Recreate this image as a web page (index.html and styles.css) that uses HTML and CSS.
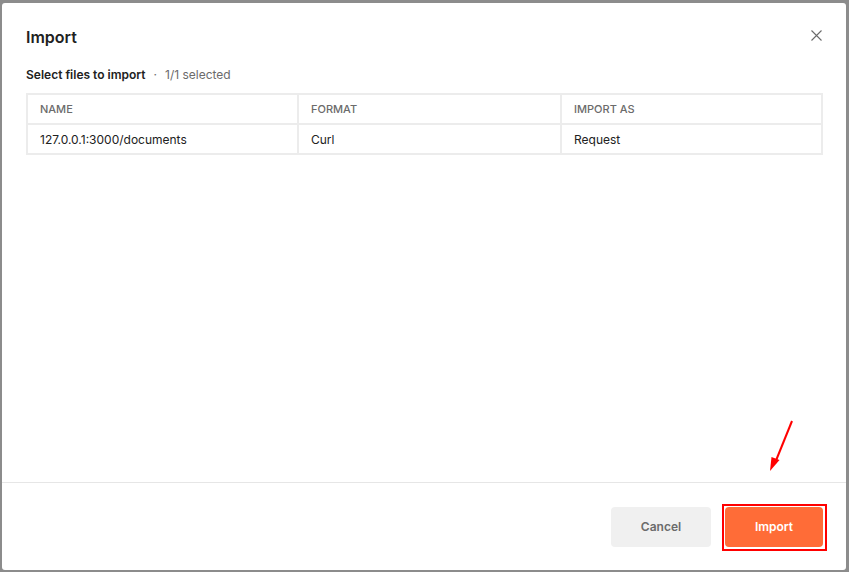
FILE: index.html
```html
<!DOCTYPE html>
<html>
<head>
<meta charset="utf-8">
<link rel="stylesheet" href="styles.css">
</head>
<body>
<div class="modal">
  <div class="header">
    <h1 class="title">Import</h1>
    <button class="close" aria-label="Close">
      <svg width="11" height="11" viewBox="0 0 11 11"><path d="M0.5 0.5 L10.5 10.5 M10.5 0.5 L0.5 10.5" stroke="#6b6b6b" stroke-width="1.1" fill="none"/></svg>
    </button>
  </div>
  <div class="body">
    <div class="subtitle"><span class="strong">Select files to import</span><span class="dot">·</span><span class="muted">1/1 selected</span></div>
    <div class="table">
      <div class="cell head">NAME</div>
      <div class="cell head">FORMAT</div>
      <div class="cell head">IMPORT AS</div>
      <div class="cell">127.0.0.1:3000/documents</div>
      <div class="cell">Curl</div>
      <div class="cell">Request</div>
    </div>
  </div>
  <div class="footer">
    <button class="btn cancel">Cancel</button>
    <button class="btn primary">Import</button>
  </div>
  <svg class="arrow" width="40" height="60" viewBox="0 0 40 60">
    <path d="M31 2 L14 44" stroke="#f00" stroke-width="2" fill="none"/>
    <path d="M9 52 L10.5 38 L18.5 41 Z" fill="#f00"/>
  </svg>
</div>
</body>
</html>
```

FILE: styles.css
```css
* { box-sizing: border-box; }
html, body { margin: 0; padding: 0; }
body {
  background: #8c8c8c;
  width: 849px;
  height: 572px;
  overflow: hidden;
  font-family: Inter, "Noto Sans", "Liberation Sans", sans-serif;
  padding: 3px 3px 2px 2px;
}
.modal {
  position: relative;
  background: #fff;
  width: 844px;
  height: 567px;
  border-radius: 3px;
  display: flex;
  flex-direction: column;
}
.header {
  display: flex;
  justify-content: space-between;
  align-items: flex-start;
  padding: 24px 24px 0 24px;
}
.title {
  margin: 0;
  font-size: 16px;
  line-height: 20px;
  font-weight: 600;
  color: #212121;
}
.close {
  border: 0;
  background: none;
  padding: 0;
  margin-top: 3px;
  width: 11px;
  height: 11px;
  display: flex;
}
.body {
  flex: 1;
  padding: 20px 23px 0 24px;
}
.subtitle {
  font-size: 12px;
  line-height: 16px;
  display: flex;
  align-items: center;
}
.strong { font-weight: 600; color: #212121; }
.dot { color: #6b6b6b; margin: 0 8px; }
.muted { color: #6b6b6b; }
.table {
  margin-top: 10px;
  display: grid;
  grid-template-columns: 271px 263px 1fr;
  border-top: 2px solid #ececec;
  border-left: 2px solid #ececec;
}
.cell {
  height: 30px;
  display: flex;
  align-items: center;
  padding-left: 12px;
  font-size: 12px;
  color: #212121;
  border-right: 2px solid #ececec;
  border-bottom: 2px solid #ececec;
}
.cell.head {
  font-size: 11px;
  color: #6b6b6b;
  font-weight: 500;
}
.footer {
  height: 88px;
  border-top: 1px solid #e6e6e6;
  display: flex;
  justify-content: flex-end;
  align-items: center;
  gap: 14px;
  padding: 0 23px 0 0;
}
.btn {
  border: 0;
  height: 40px;
  border-radius: 4px;
  font-family: inherit;
  font-size: 12px;
  font-weight: 600;
}
.cancel {
  width: 100px;
  background: #f0f0f0;
  color: #6b6b6b;
}
.primary {
  position: relative;
  width: 98px;
  background: #ff6c37;
  color: #fff;
}
.primary::after {
  content: "";
  position: absolute;
  left: -3px;
  top: -3px;
  right: -4px;
  bottom: -4px;
  border: 2.5px solid #ff0000;
}
.arrow {
  position: absolute;
  left: 759px;
  top: 416px;
}
```
